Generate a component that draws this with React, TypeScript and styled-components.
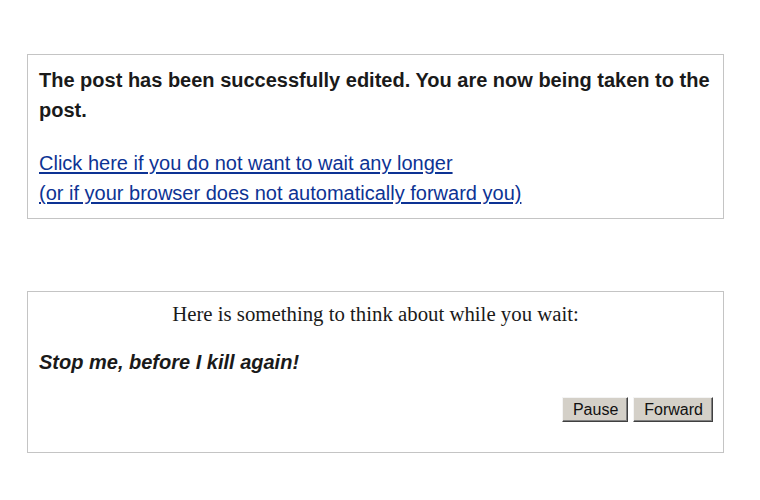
import React from "react";
import styled, { createGlobalStyle } from "styled-components";

const Global = createGlobalStyle`
  html, body { margin: 0; padding: 0; background: #ffffff; }
  body { font-family: "Liberation Sans", Arial, sans-serif; color: #1a1a1a; }
`;

const Page = styled.div`
  padding: 54px 36px 0 27px;
  display: flex;
  flex-direction: column;
  gap: 72px;
  width: 697px;
`;

const Panel = styled.div`
  border: 1px solid #c4c4c4;
  padding: 10px 11px 10px 11px;
  background: #fff;
`;

const Message = styled.p`
  margin: 0;
  font-weight: bold;
  font-size: 20px;
  line-height: 30px;
  color: #1a1a1a;
`;

const Links = styled.div`
  margin-top: 23px;
  display: flex;
  flex-direction: column;
`;

const Link = styled.a`
  font-size: 20px;
  line-height: 30px;
  color: #0d3394;
  text-decoration: underline;
  text-underline-offset: 2px;
`;

const Intro = styled.div`
  font-family: "Liberation Serif", "Times New Roman", serif;
  font-size: 20.8px;
  line-height: 24px;
  text-align: center;
  color: #1a1a1a;
`;

const Quote = styled.div`
  margin-top: 24px;
  font-size: 20px;
  line-height: 24px;
  font-weight: bold;
  font-style: italic;
  color: #1a1a1a;
`;

const Actions = styled.div`
  margin: 23px -1px 20px 0;
  display: flex;
  justify-content: flex-end;
  gap: 5px;
`;

const Button = styled.button`
  font-family: "Liberation Sans", Arial, sans-serif;
  font-size: 16px;
  height: 25px;
  padding: 0 9px 0 10px;
  background: #d4d0c8;
  color: #111;
  border: 1px solid;
  border-color: #f4f4f4 #404040 #404040 #f4f4f4;
  box-shadow: inset -1px -1px 0 #808080;
  border-radius: 0;
`;

export default function App() {
  return (
    <>
      <Global />
      <Page>
        <Panel>
          <Message>
            The post has been successfully edited. You are now being taken to the post.
          </Message>
          <Links>
            <Link href="#">Click here if you do not want to wait any longer</Link>
            <Link href="#">(or if your browser does not automatically forward you)</Link>
          </Links>
        </Panel>
        <Panel>
          <Intro>Here is something to think about while you wait:</Intro>
          <Quote>Stop me, before I kill again!</Quote>
          <Actions>
            <Button>Pause</Button>
            <Button>Forward</Button>
          </Actions>
        </Panel>
      </Page>
    </>
  );
}
